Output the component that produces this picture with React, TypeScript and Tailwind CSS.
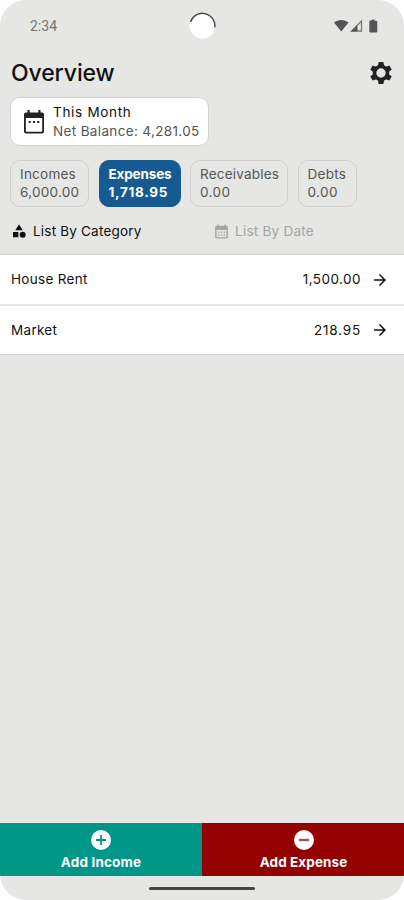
import { MdArrowForward, MdCalendarMonth, MdCategory } from "react-icons/md";

interface Summary {
	label: string;
	amount: string;
	box: string;
	labelSpacing: string;
	amountSpacing: string;
	active?: boolean;
}

const summaries: Summary[] = [
	{ label: "Incomes", amount: "6,000.00", box: "w-[79px]", labelSpacing: "tracking-[0.25px]", amountSpacing: "tracking-[0.25px]" },
	{ label: "Expenses", amount: "1,718.95", box: "w-[82px]", labelSpacing: "tracking-[-0.15px]", amountSpacing: "tracking-[0.7px]", active: true },
	{ label: "Receivables", amount: "0.00", box: "w-[98px]", labelSpacing: "tracking-[0.2px]", amountSpacing: "tracking-[0.4px]" },
	{ label: "Debts", amount: "0.00", box: "w-[59px]", labelSpacing: "tracking-[0.3px]", amountSpacing: "tracking-[0.4px]" },
];

const rows = [
	{ name: "House Rent", amount: "1,500.00", amountSpacing: "tracking-[0.45px]" },
	{ name: "Market", amount: "218.95", amountSpacing: "tracking-[0.8px]" },
];

const teeth = [0, 60, 120, 180, 240, 300];

function StatusBar() {
	return (
		<div className="relative flex h-[52px] items-center justify-between pl-[30px] pr-[26px]">
			<span className="font-[Roboto] text-[14px] leading-none text-[#777777]">2:34</span>
			<svg className="absolute left-[189px] top-[12px]" width="27" height="27" viewBox="0 0 27 27">
				<circle cx="13.500" cy="13.500" r="13" fill="white" />
				<path d="M1.500 10A12.500 12.500 0 0 1 25.800 15.500" fill="none" stroke="#444444" strokeWidth="1.400" />
			</svg>
			<svg width="44" height="14" viewBox="0 0 44 14" fill="#555555">
				<path d="M0 3.600C4 0 10.500 0 14.500 3.600L7.250 12.500Z" />
				<path d="M27.500 2V12H17.500Z" fill="none" stroke="#777777" strokeWidth="1.300" />
				<path d="M23.500 6V12.500H17Z" />
				<path d="M36.300 1.500h1.500V.500h3v1.500H42.500a.8.8 0 0 1 .8.800v9.800a.8.8 0 0 1-.8.800h-6.400a.8.8 0 0 1-.8-.800V2.300a.8.8 0 0 1 .8-.800z" />
			</svg>
		</div>
	);
}

function GearIcon() {
	return (
		<svg width="24" height="24" viewBox="0 0 24 24">
			<circle cx="12" cy="12" r="6.500" fill="none" stroke="#222222" strokeWidth="3.600" />
			{teeth.map((angle) => (
				<path key={angle} d="M9.600 1h4.800l.8 4.500H8.800z" fill="#222222" transform={`rotate(${angle} 12 12)`} />
			))}
		</svg>
	);
}

function CalendarIcon() {
	return (
		<svg width="22" height="24" viewBox="0 0 22 24" fill="#222222">
			<path fillRule="evenodd" d="M3 2.500h16a2 2 0 0 1 2 2v17a2 2 0 0 1-2 2H3a2 2 0 0 1-2-2v-17a2 2 0 0 1 2-2zM2.800 8v13a.8.8 0 0 0 .8.800h14.800a.8.8 0 0 0 .8-.800V8z" />
			<path d="M4.500 0h2.200v4H4.500zM15.300 0h2.200v4h-2.200z" />
			<path d="M5.700 11h2v2h-2zM10 11h2v2h-2zM14.300 11h2v2h-2z" />
		</svg>
	);
}

export default function App() {
	return (
		<div className="h-[900px] w-[404px] bg-white font-[Inter,sans-serif] text-[13.5px] text-[#111111]">
			<div className="flex h-full flex-col overflow-hidden rounded-[26px] bg-[#e6e6e4]">
				<StatusBar />
				<header className="flex h-[41px] items-center justify-between pl-[11px] pr-[11px]">
					<h1 className="pt-[1px] text-[23px] font-medium leading-none tracking-[-0.1px]">Overview</h1>
					<GearIcon />
				</header>

				<div className="ml-[10px] mt-[4px] flex h-[49px] w-[199px] items-center rounded-[10px] border border-[#d2d2d2] bg-white pl-[12px]">
					<CalendarIcon />
					<div className="ml-[8px] whitespace-nowrap leading-[19px]">
						<div className="tracking-[0.7px]">This Month</div>
						<div className="tracking-[0.35px] text-[#555555]">Net Balance: 4,281.05</div>
					</div>
				</div>

				<div className="ml-[10px] mt-[14px] flex gap-[9.500px]">
					{summaries.map((s) => (
						<div
							key={s.label}
							className={`${s.box} h-[47px] whitespace-nowrap rounded-[10px] border pl-[9px] pt-[4px] leading-[18px] ${
								s.active ? "border-[#175a92] bg-[#175a92] font-bold text-white" : "border-[#cfcfcf] text-[#555555]"
							}`}
						>
							<div className={s.labelSpacing}>{s.label}</div>
							<div className={s.amountSpacing}>{s.amount}</div>
						</div>
					))}
				</div>

				<div className="mt-[6px] flex h-[36px] items-center">
					<div className="flex w-[202px] items-center pl-[11px]">
						<MdCategory className="size-[16px]" />
						<span className="ml-[6px] tracking-[0.2px]">List By Category</span>
					</div>
					<div className="flex items-center pl-[11px] text-[#a5a5a5]">
						<MdCalendarMonth className="size-[17px]" />
						<span className="ml-[5px] tracking-[0.25px]">List By Date</span>
					</div>
				</div>

				<div className="mt-[5px] border-b border-t border-[#d2d2d2]">
					{rows.map((r, i) => (
						<div
							key={r.name}
							className={`flex items-center bg-white pl-[11px] pr-[15px] ${i === 0 ? "h-[51px] border-b-2 border-[#e6e6e6]" : "h-[48px]"}`}
						>
							<span className="tracking-[0.3px]">{r.name}</span>
							<span className={`ml-auto ${r.amountSpacing}`}>{r.amount}</span>
							<MdArrowForward className="ml-[10px] size-[18px]" />
						</div>
					))}
				</div>

				<footer className="mt-auto">
					<div className="flex h-[53px] font-bold text-white">
						<button className="flex w-[202px] flex-col items-center bg-[#009688] pt-[7px]">
							<svg width="20" height="20" viewBox="0 0 20 20" fill="none">
								<circle cx="10" cy="10" r="10" fill="white" />
								<path d="M10 5v10M5 10h10" stroke="#009688" strokeWidth="1.800" />
							</svg>
							<span className="mt-[3px] leading-[18px] tracking-[0.15px]">Add Income</span>
						</button>
						<button className="flex w-[202px] flex-col items-center bg-[#940000] pl-[1px] pt-[7px]">
							<svg width="20" height="20" viewBox="0 0 20 20" fill="none">
								<circle cx="10" cy="10" r="10" fill="white" />
								<path d="M5 10h10" stroke="#aa5555" strokeWidth="2.500" />
							</svg>
							<span className="mt-[3px] leading-[18px] tracking-[0.1px]">Add Expense</span>
						</button>
					</div>
					<div className="flex h-[24px] justify-center pt-[11px]">
						<div className="h-[3px] w-[106px] rounded-full bg-[#444444]" />
					</div>
				</footer>
			</div>
		</div>
	);
}
